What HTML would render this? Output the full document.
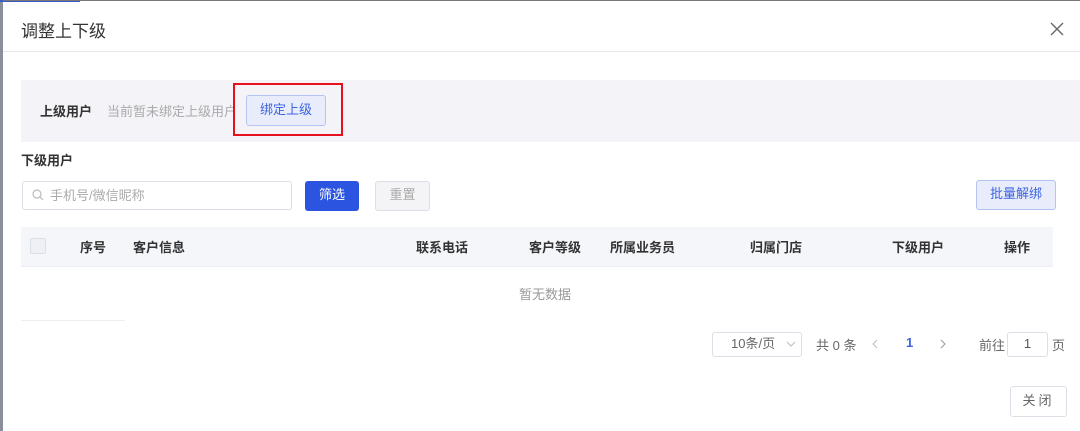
<!DOCTYPE html>
<html><head><meta charset="utf-8"><style>
*{margin:0;padding:0;box-sizing:border-box}
body{width:1080px;height:431px;overflow:hidden;background:#fff;font-family:"Liberation Sans","Noto Sans CJK SC",sans-serif;position:relative;color:#333}
.a{position:absolute}
.t{font-size:13px}
</style></head><body>
<div class="a" style="left:0;top:0;width:3px;height:431px;background:#8a8f99"></div>
<div class="a" style="left:0;top:0;width:80px;height:2px;background:#3a5cc7"></div>
<div class="a" style="left:3px;top:0;width:1077px;height:1px;background:#777"></div>
<div class="a" style="left:21px;top:17px;font-size:17px;color:#333">调整上下级</div>
<svg class="a" style="left:1050px;top:22px" width="14" height="14"><path d="M1 1L13 13M13 1L1 13" stroke="#666" stroke-width="1.4"/></svg>
<div class="a" style="left:3px;top:51px;width:1077px;height:1px;background:#e8e8ec"></div>
<div class="a" style="left:21px;top:80px;width:1059px;height:62px;background:#f4f4f8"></div>
<div class="a t" style="left:40px;top:101px;font-weight:bold;color:#333">上级用户</div>
<div class="a t" style="left:107px;top:101px;color:#aaa">当前暂未绑定上级用户</div>
<div class="a t" style="left:246px;top:95px;width:80px;height:31px;background:#e9edfb;border:1px solid #b4c3f2;border-radius:3px;color:#3d64e0;text-align:center;line-height:28px">绑定上级</div>
<div class="a" style="left:233px;top:83px;width:110px;height:53px;border:2px solid #e8101c"></div>
<div class="a t" style="left:21px;top:150px;font-weight:bold">下级用户</div>
<div class="a" style="left:22px;top:181px;width:270px;height:29px;border:1px solid #dcdfe6;border-radius:3px"></div>
<svg class="a" style="left:32px;top:189px" width="12" height="12"><circle cx="5" cy="5" r="4" fill="none" stroke="#bbb" stroke-width="1.2"/><path d="M8 8L11 11" stroke="#bbb" stroke-width="1.2"/></svg>
<div class="a t" style="left:50px;top:185px;color:#aaa">手机号/微信昵称</div>
<div class="a t" style="left:305px;top:181px;width:54px;height:30px;background:#2b55e0;border-radius:3px;color:#fff;text-align:center;line-height:28px">筛选</div>
<div class="a t" style="left:375px;top:181px;width:55px;height:30px;background:#f4f4f6;border:1px solid #dcdfe6;border-radius:3px;color:#aaa;text-align:center;line-height:26px">重置</div>
<div class="a t" style="left:976px;top:180px;width:80px;height:30px;background:#e9edfb;border:1px solid #b4c3f2;border-radius:3px;color:#3d64e0;text-align:center;line-height:26px">批量解绑</div>
<div class="a" style="left:21px;top:227px;width:1032px;height:40px;background:#f5f6fa;border-bottom:1px solid #ebeef5"></div>
<div class="a" style="left:30px;top:238px;width:16px;height:16px;border:1px solid #dcdfe6;background:#eef0f5;border-radius:2px"></div>
<div class="a t" style="left:80px;top:237px;font-weight:bold">序号</div>
<div class="a t" style="left:133px;top:237px;font-weight:bold">客户信息</div>
<div class="a t" style="left:416px;top:237px;font-weight:bold">联系电话</div>
<div class="a t" style="left:529px;top:237px;font-weight:bold">客户等级</div>
<div class="a t" style="left:610px;top:237px;font-weight:bold">所属业务员</div>
<div class="a t" style="left:750px;top:237px;font-weight:bold">归属门店</div>
<div class="a t" style="left:892px;top:237px;font-weight:bold">下级用户</div>
<div class="a t" style="left:1004px;top:237px;font-weight:bold">操作</div>
<div class="a t" style="left:519px;top:284px;color:#999">暂无数据</div>
<div class="a" style="left:21px;top:320px;width:104px;height:1px;background:#eee"></div>
<div class="a t" style="left:712px;top:332px;width:90px;height:25px;border:1px solid #dcdfe6;border-radius:3px;color:#666;line-height:21px;padding-left:18px">10条/页</div>
<svg class="a" style="left:786px;top:341px" width="10" height="7"><path d="M1 1L5 5L9 1" fill="none" stroke="#bbb"/></svg>
<div class="a t" style="left:816px;top:335px;color:#666">共 0 条</div>
<svg class="a" style="left:871px;top:339px" width="7" height="10"><path d="M6 1L2 5L6 9" fill="none" stroke="#bbb"/></svg>
<div class="a t" style="left:906px;top:335px;color:#3d64e0;font-weight:bold">1</div>
<svg class="a" style="left:940px;top:339px" width="7" height="10"><path d="M1 1L5 5L1 9" fill="none" stroke="#999"/></svg>
<div class="a t" style="left:979px;top:335px;color:#666">前往</div>
<div class="a t" style="left:1007px;top:332px;width:41px;height:25px;border:1px solid #dcdfe6;border-radius:3px;text-align:center;line-height:21px;color:#555">1</div>
<div class="a t" style="left:1052px;top:335px;color:#666">页</div>
<div class="a t" style="left:1010px;top:386px;width:57px;height:31px;border:1px solid #dcdfe6;border-radius:3px;text-align:center;line-height:27px;color:#666;letter-spacing:3px">关闭</div>
</body></html>
